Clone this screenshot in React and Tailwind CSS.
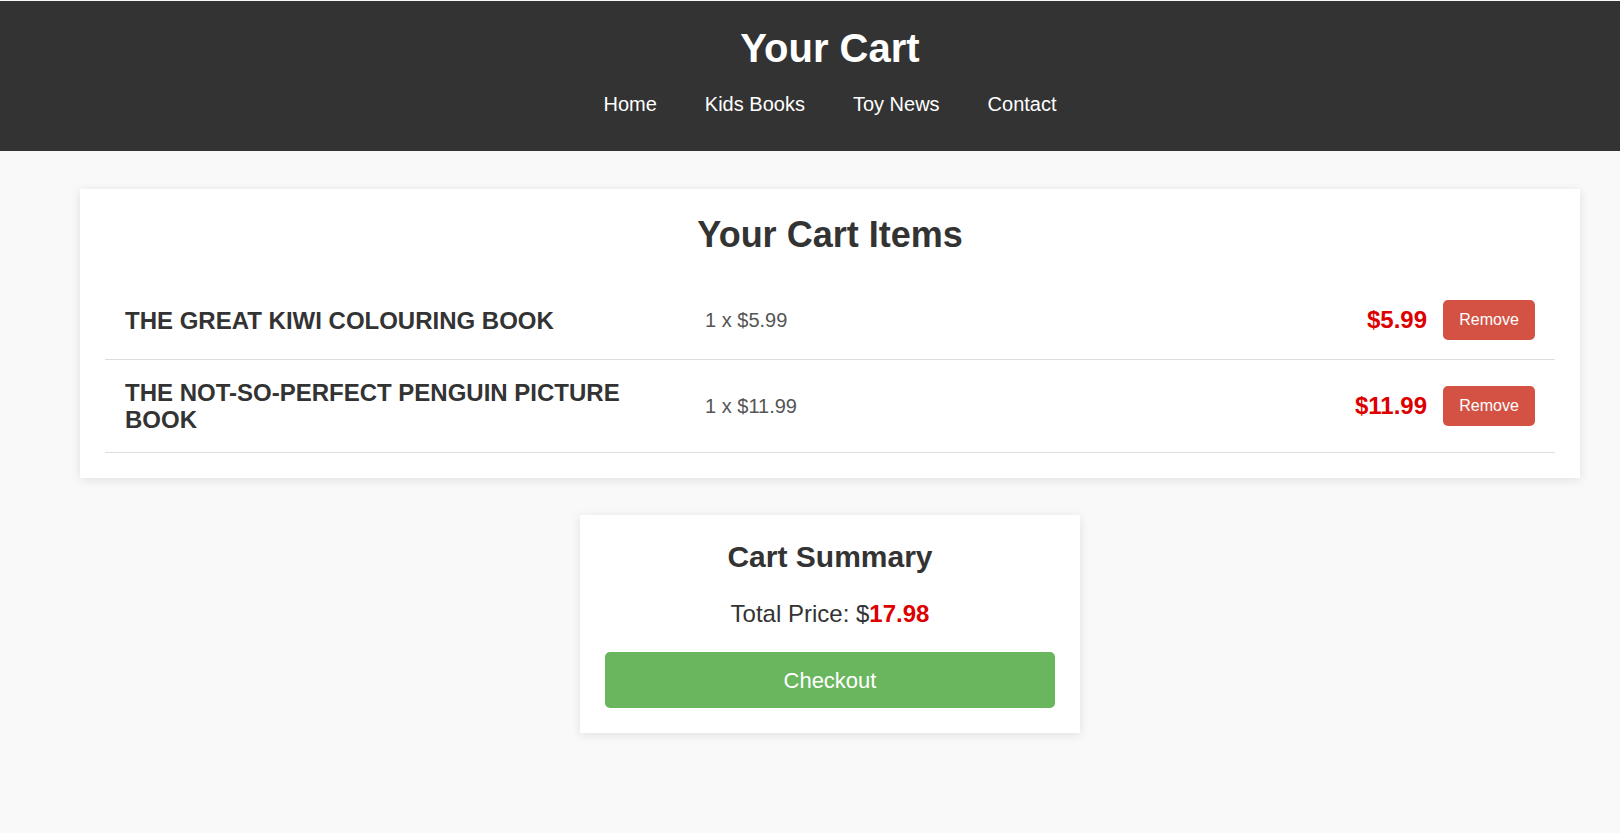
import React from 'react';

const items = [
  { id: 1, title: 'The Great Kiwi Colouring Book', qty: 1, price: 5.99 },
  { id: 2, title: 'The Not-So-Perfect Penguin Picture Book', qty: 1, price: 11.99 },
];

function App() {
  const total = items.reduce((sum, i) => sum + i.qty * i.price, 0);

  return (
    <div className="min-h-screen w-full overflow-hidden bg-[#f9f9f9] pt-px font-['Liberation_Sans',Arial,sans-serif]">
      <div className="w-[1660px] pb-[60px]">
        {/* Header */}
        <header className="bg-[#333] text-white pt-[24px] pb-[25px] text-center">
          <h1 className="text-[40px] leading-[46px] font-bold">Your Cart</h1>
          <nav className="mt-[12px] flex justify-center gap-[48px] text-[20px] leading-[23px]">
            <a href="#" className="py-[10px]">Home</a>
            <a href="#" className="py-[10px]">Kids Books</a>
            <a href="#" className="py-[10px]">Toy News</a>
            <a href="#" className="py-[10px]">Contact</a>
          </nav>
        </header>

        {/* Cart items */}
        <section className="mx-[80px] mt-[38px] bg-white p-[25px] shadow-[0_2px_10px_rgba(0,0,0,0.1)]">
          <h2 className="text-center text-[36px] leading-[41px] font-bold text-[#333] mb-[26px]">
            Your Cart Items
          </h2>
          <div>
            {items.map((item) => (
              <div key={item.id} className="flex items-center px-[20px] py-[19px] border-b border-[#ddd]">
                <div className="w-[564px] shrink-0 text-[24px] leading-[27px] font-bold uppercase text-[#333]">
                  {item.title}
                </div>
                <div className="ml-[16px] flex-1 text-[20px] text-[#555]">
                  {item.qty} x ${item.price.toFixed(2)}
                </div>
                <div className="text-[24px] font-bold text-[#dd0000]">${item.price.toFixed(2)}</div>
                <button className="ml-[16px] h-[40px] w-[92px] rounded-[5px] bg-[#d35244] text-[16px] text-white">
                  Remove
                </button>
              </div>
            ))}
          </div>
        </section>

        {/* Summary */}
        <section className="mx-auto mt-[37px] w-[500px] bg-white p-[25px] text-center shadow-[0_2px_10px_rgba(0,0,0,0.1)]">
          <h2 className="text-[30px] leading-[34.5px] font-bold text-[#333] mb-[25px]">Cart Summary</h2>
          <p className="text-[24px] leading-[27.6px] text-[#333] mb-[25px]">
            Total Price: $<span className="font-bold text-[#dd0000]">{total.toFixed(2)}</span>
          </p>
          <button className="h-[56px] w-full rounded-[5px] bg-[#6ab65e] text-[22px] text-white">
            Checkout
          </button>
        </section>
      </div>
    </div>
  );
}

export default App;
